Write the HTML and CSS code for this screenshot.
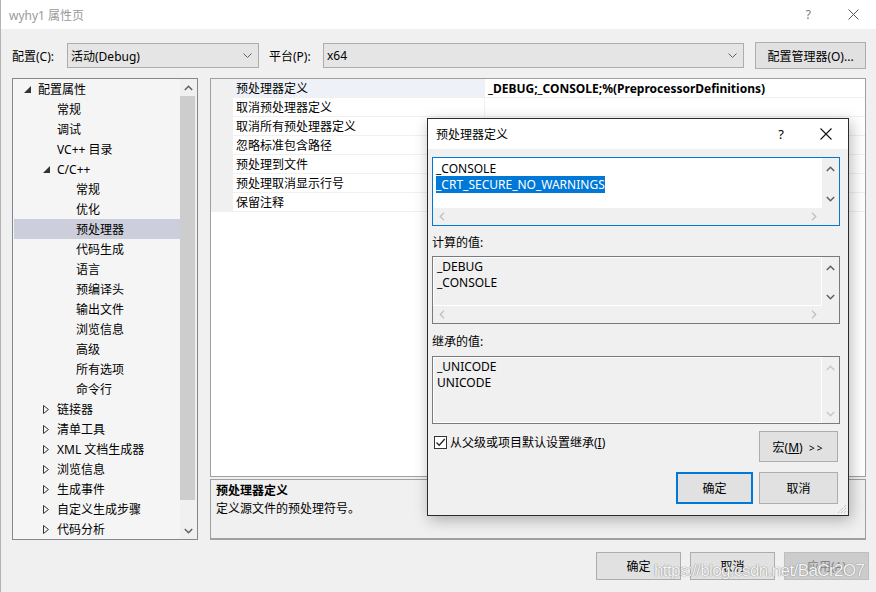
FILE: index.html
```html
<!DOCTYPE html>
<html>

<head>
    <meta charset="utf-8">
    <title>wyhy1 属性页</title>
    <link rel="stylesheet" href="styles.css">
</head>

<body>
    <div class="window">
        <div class="titlebar">
            <span class="title">wyhy1 属性页</span>
            <span class="help">?</span>
            <svg class="close" width="11" height="11" viewBox="0 0 11 11">
                <path d="M0.5 0.5L10.5 10.5M10.5 0.5L0.5 10.5" stroke="#555" stroke-width="1" fill="none" />
            </svg>
        </div>

        <div class="toolbar">
            <span class="lbl lbl-config">配置(C):</span>
            <div class="combo combo-config">
                <span class="combo-text">活动(Debug)</span>
                <svg width="9" height="5" viewBox="0 0 9 5">
                    <polyline points="0.5,0.5 4.5,4.5 8.5,0.5" stroke="#606060" fill="none" />
                </svg>
            </div>
            <span class="lbl lbl-platform">平台(P):</span>
            <div class="combo combo-platform">
                <span class="combo-text">x64</span>
                <svg width="9" height="5" viewBox="0 0 9 5">
                    <polyline points="0.5,0.5 4.5,4.5 8.5,0.5" stroke="#606060" fill="none" />
                </svg>
            </div>
            <button class="btn btn-manager">配置管理器(O)...</button>
        </div>

        <div class="main">
            <div class="tree">
                <div class="tree-list">
                    <div class="node l0"><span class="tw"><svg width="7" height="7" viewBox="0 0 7 7"><polygon points="7,0 7,7 0,7" fill="#333" /></svg></span>配置属性</div>
                    <div class="node l1 leaf">常规</div>
                    <div class="node l1 leaf">调试</div>
                    <div class="node l1 leaf">VC++ 目录</div>
                    <div class="node l1"><span class="tw"><svg width="7" height="7" viewBox="0 0 7 7"><polygon points="7,0 7,7 0,7" fill="#333" /></svg></span>C/C++</div>
                    <div class="node l2">常规</div>
                    <div class="node l2">优化</div>
                    <div class="node l2 sel">预处理器</div>
                    <div class="node l2">代码生成</div>
                    <div class="node l2">语言</div>
                    <div class="node l2">预编译头</div>
                    <div class="node l2">输出文件</div>
                    <div class="node l2">浏览信息</div>
                    <div class="node l2">高级</div>
                    <div class="node l2">所有选项</div>
                    <div class="node l2">命令行</div>
                    <div class="node l1"><span class="tw"><svg width="6" height="9" viewBox="0 0 6 9"><polygon points="0.5,0.5 5.5,4.5 0.5,8.5" stroke="#333" fill="none" /></svg></span>链接器</div>
                    <div class="node l1"><span class="tw"><svg width="6" height="9" viewBox="0 0 6 9"><polygon points="0.5,0.5 5.5,4.5 0.5,8.5" stroke="#333" fill="none" /></svg></span>清单工具</div>
                    <div class="node l1"><span class="tw"><svg width="6" height="9" viewBox="0 0 6 9"><polygon points="0.5,0.5 5.5,4.5 0.5,8.5" stroke="#333" fill="none" /></svg></span>XML 文档生成器</div>
                    <div class="node l1"><span class="tw"><svg width="6" height="9" viewBox="0 0 6 9"><polygon points="0.5,0.5 5.5,4.5 0.5,8.5" stroke="#333" fill="none" /></svg></span>浏览信息</div>
                    <div class="node l1"><span class="tw"><svg width="6" height="9" viewBox="0 0 6 9"><polygon points="0.5,0.5 5.5,4.5 0.5,8.5" stroke="#333" fill="none" /></svg></span>生成事件</div>
                    <div class="node l1"><span class="tw"><svg width="6" height="9" viewBox="0 0 6 9"><polygon points="0.5,0.5 5.5,4.5 0.5,8.5" stroke="#333" fill="none" /></svg></span>自定义生成步骤</div>
                    <div class="node l1"><span class="tw"><svg width="6" height="9" viewBox="0 0 6 9"><polygon points="0.5,0.5 5.5,4.5 0.5,8.5" stroke="#333" fill="none" /></svg></span>代码分析</div>
                </div>
                <div class="tree-scroll">
                    <div class="arrow-box">
                        <svg width="9" height="6" viewBox="0 0 9 6"><polyline points="0.8,5 4.5,1.3 8.2,5" stroke="#606060" stroke-width="1.5" fill="none" /></svg>
                    </div>
                    <div class="thumb"></div>
                    <div class="arrow-box arrow-bottom">
                        <svg width="9" height="6" viewBox="0 0 9 6"><polyline points="0.8,1 4.5,4.7 8.2,1" stroke="#606060" stroke-width="1.5" fill="none" /></svg>
                    </div>
                </div>
            </div>

            <div class="right">
                <div class="grid">
                    <div class="prow sel"><div class="pgut"></div><div class="pname">预处理器定义</div><div class="pval">_DEBUG;_CONSOLE;%(PreprocessorDefinitions)</div></div>
                    <div class="prow"><div class="pgut"></div><div class="pname">取消预处理器定义</div><div class="pval"></div></div>
                    <div class="prow"><div class="pgut"></div><div class="pname">取消所有预处理器定义</div><div class="pval"></div></div>
                    <div class="prow"><div class="pgut"></div><div class="pname">忽略标准包含路径</div><div class="pval"></div></div>
                    <div class="prow"><div class="pgut"></div><div class="pname">预处理到文件</div><div class="pval"></div></div>
                    <div class="prow"><div class="pgut"></div><div class="pname">预处理取消显示行号</div><div class="pval"></div></div>
                    <div class="prow"><div class="pgut"></div><div class="pname">保留注释</div><div class="pval"></div></div>
                </div>
                <div class="desc">
                    <div class="desc-title">预处理器定义</div>
                    <div>定义源文件的预处理符号。</div>
                </div>
            </div>
        </div>

        <div class="footer">
            <button class="btn btn-foot">确定</button>
            <button class="btn btn-foot">取消</button>
            <button class="btn btn-foot disabled">应用(A)</button>
        </div>

        <div class="watermark">https://blog.csdn.net/BaCr2O7</div>

        <!-- child dialog over the property page -->
        <div class="dialog">
            <div class="dlg-titlebar">
                <span class="dlg-title">预处理器定义</span>
                <span class="dlg-help">?</span>
                <svg class="dlg-close" width="12" height="12" viewBox="0 0 12 12">
                    <path d="M0.5 0.5L11.5 11.5M11.5 0.5L0.5 11.5" stroke="#111" stroke-width="1.1" fill="none" />
                </svg>
            </div>
            <div class="dlg-body">
                <div class="lbox focus box-edit">
                    <div class="lbox-main">
                        <div class="lbox-text">
                            <div>_CONSOLE</div>
                            <div><span class="hl">_CRT_SECURE_NO_WARNINGS</span></div>
                        </div>
                        <div class="vbar">
                            <svg width="9" height="6" viewBox="0 0 9 6"><polyline points="0.8,5 4.5,1.3 8.2,5" stroke="#606060" stroke-width="1.5" fill="none" /></svg>
                            <svg width="9" height="6" viewBox="0 0 9 6"><polyline points="0.8,1 4.5,4.7 8.2,1" stroke="#606060" stroke-width="1.5" fill="none" /></svg>
                        </div>
                    </div>
                    <div class="hbar">
                        <svg width="6" height="9" viewBox="0 0 6 9"><polyline points="5,0.8 1.3,4.5 5,8.2" stroke="#c2c2c2" stroke-width="1.4" fill="none" /></svg>
                        <svg width="6" height="9" viewBox="0 0 6 9"><polyline points="1,0.8 4.7,4.5 1,8.2" stroke="#c2c2c2" stroke-width="1.4" fill="none" /></svg>
                    </div>
                </div>

                <div class="dlg-label">计算的值:</div>
                <div class="lbox ro box-calc">
                    <div class="lbox-main">
                        <div class="lbox-text">
                            <div>_DEBUG</div>
                            <div>_CONSOLE</div>
                        </div>
                        <div class="vbar">
                            <svg width="9" height="6" viewBox="0 0 9 6"><polyline points="0.8,5 4.5,1.3 8.2,5" stroke="#606060" stroke-width="1.5" fill="none" /></svg>
                            <svg width="9" height="6" viewBox="0 0 9 6"><polyline points="0.8,1 4.5,4.7 8.2,1" stroke="#606060" stroke-width="1.5" fill="none" /></svg>
                        </div>
                    </div>
                    <div class="hbar">
                        <svg width="6" height="9" viewBox="0 0 6 9"><polyline points="5,0.8 1.3,4.5 5,8.2" stroke="#c2c2c2" stroke-width="1.4" fill="none" /></svg>
                        <svg width="6" height="9" viewBox="0 0 6 9"><polyline points="1,0.8 4.7,4.5 1,8.2" stroke="#c2c2c2" stroke-width="1.4" fill="none" /></svg>
                    </div>
                </div>

                <div class="dlg-label label-inherit">继承的值:</div>
                <div class="lbox ro box-inherit">
                    <div class="lbox-main">
                        <div class="lbox-text">
                            <div>_UNICODE</div>
                            <div>UNICODE</div>
                        </div>
                        <div class="vbar">
                            <svg width="9" height="6" viewBox="0 0 9 6"><polyline points="0.8,5 4.5,1.3 8.2,5" stroke="#c8c8c8" stroke-width="1.5" fill="none" /></svg>
                            <svg width="9" height="6" viewBox="0 0 9 6"><polyline points="0.8,1 4.5,4.7 8.2,1" stroke="#c8c8c8" stroke-width="1.5" fill="none" /></svg>
                        </div>
                    </div>
                </div>

                <div class="dlg-row">
                    <label class="chk">
                        <span class="chk-box">
                            <svg width="11" height="11" viewBox="0 0 11 11"><polyline points="1.5,5.5 4.2,8.3 9.8,2" stroke="#222" stroke-width="1.3" fill="none" /></svg>
                        </span>
                        从父级或项目默认设置继承(<u>I</u>)
                    </label>
                    <button class="btn btn-macro">宏(<u>M</u>)&nbsp; <span class="gg">&gt;&gt;</span></button>
                </div>

                <div class="dlg-buttons">
                    <button class="btn btn-ok">确定</button>
                    <button class="btn btn-cancel">取消</button>
                </div>
            </div>
            <svg class="grip" width="11" height="11" viewBox="0 0 11 11">
                <path d="M10 2L2 10M10 5L5 10M10 8L8 10" stroke="#b0b0b0" stroke-width="1" stroke-dasharray="1 1" fill="none" />
            </svg>
        </div>
    </div>
</body>

</html>
```

FILE: styles.css
```css
body {
    margin: 0;
    padding: 0;
    font-family: "Noto Sans", "Noto Sans CJK SC", sans-serif;
    font-size: 12px;
    color: #000;
    background-color: #f0f0f0;
}

button {
    font-family: inherit;
    font-size: 12px;
    color: #000;
    padding: 0;
}

.window {
    position: relative;
    width: 876px;
    height: 592px;
    box-sizing: border-box;
    border-left: 1px solid #b4b4b4;
    background-color: #f0f0f0;
    overflow: hidden;
}

/* title bar */
.titlebar {
    height: 29px;
    background-color: #ffffff;
    display: flex;
    align-items: center;
    padding-left: 8px;
    padding-right: 17px;
}

.title {
    flex: 1;
    color: #9a9a9a;
}

.help {
    color: #777;
    font-size: 12px;
    margin-right: 37px;
}

/* configuration row */
.toolbar {
    display: flex;
    align-items: center;
    height: 27px;
    padding: 13px 0 0 11px;
}

.lbl {
    white-space: nowrap;
}

.lbl-config {
    width: 55px;
}

.lbl-platform {
    width: 54px;
    margin-left: 10px;
}

.combo {
    height: 25px;
    box-sizing: border-box;
    border: 1px solid #adadad;
    background-color: #e5e5e5;
    display: flex;
    align-items: center;
    padding: 0 6px 0 3px;
}

.combo-text {
    flex: 1;
}

.combo-config {
    width: 192px;
}

.combo-platform {
    width: 421px;
}

.btn {
    box-sizing: border-box;
    border: 1px solid #adadad;
    background-color: #e1e1e1;
}

.btn-manager {
    width: 111px;
    height: 27px;
    margin-left: 11px;
}

/* tree + property grid */
.main {
    display: flex;
    gap: 12px;
    height: 462px;
    margin-top: 9px;
    padding-left: 11px;
}

.tree {
    width: 186px;
    box-sizing: border-box;
    border: 1px solid #828790;
    background-color: #f5f5f5;
    display: flex;
    overflow: hidden;
}

.tree-list {
    flex: 1;
    min-width: 0;
}

.node {
    height: 20px;
    display: flex;
    align-items: center;
    white-space: nowrap;
}

.tw {
    width: 14px;
    display: flex;
    align-items: center;
}

.l0 {
    padding-left: 11px;
}

.l1 {
    padding-left: 30px;
}

.l1.leaf {
    padding-left: 44px;
}

.l2 {
    padding-left: 63px;
}

.node.sel {
    background-color: #cccedb;
    margin-left: 1px;
    padding-left: 62px;
}

.tree-scroll {
    width: 17px;
    background-color: #f0f0f0;
    display: flex;
    flex-direction: column;
}

.arrow-box {
    height: 17px;
    display: flex;
    align-items: center;
    justify-content: center;
}

.arrow-bottom {
    margin-top: auto;
}

.thumb {
    height: 404px;
    width: 15px;
    margin-left: 0;
    background-color: #cdcdcd;
}

.right {
    width: 656px;
    display: flex;
    flex-direction: column;
    gap: 2px;
}

.grid {
    flex: 1;
    border: 1px solid #a0a0a0;
    background-color: #ffffff;
}

.prow {
    display: flex;
    height: 19px;
}

.pgut {
    width: 22px;
    background-color: #f0f0f0;
}

.pname {
    width: 252px;
    box-sizing: border-box;
    height: 19px;
    padding: 2px 0 0 3px;
    line-height: 16px;
    border-right: 1px solid #f0f0f0;
    border-bottom: 1px solid #f0f0f0;
}

.prow.sel .pname {
    background-color: #eef2f8;
}

.pval {
    flex: 1;
    box-sizing: border-box;
    height: 19px;
    padding: 2px 0 0 3px;
    line-height: 16px;
    font-weight: bold;
    border-bottom: 1px solid #f0f0f0;
    white-space: nowrap;
}

.desc {
    height: 61px;
    box-sizing: border-box;
    border: 1px solid #a0a0a0;
    border-bottom: 2px solid #a0a0a0;
    background-color: #f0f0f0;
    padding: 2px 5px;
    line-height: 18px;
}

.desc-title {
    font-weight: bold;
}

/* bottom buttons */
.footer {
    display: flex;
    justify-content: flex-end;
    gap: 9px;
    padding: 12px 7px 0 0;
}

.btn-foot {
    width: 85px;
    height: 28px;
}

.btn-foot.disabled {
    background-color: #cccccc;
    border-color: #bfbfbf;
    color: #838383;
}

.watermark {
    position: absolute;
    left: 653px;
    top: 561px;
    font-family: "Liberation Sans", sans-serif;
    font-size: 17px;
    letter-spacing: -0.6px;
    color: rgba(255, 255, 255, 0.92);
    text-shadow: 0 0 1px #8a8a8a, 0 0 1px #8a8a8a;
    white-space: nowrap;
    pointer-events: none;
}

/* preprocessor definitions dialog */
.dialog {
    position: absolute;
    left: 426px;
    top: 118px;
    width: 422px;
    height: 398px;
    box-sizing: border-box;
    border: 1px solid #2b2b2b;
    background-color: #f0f0f0;
    box-shadow: 2px 4px 14px rgba(0, 0, 0, 0.28);
}

.dlg-titlebar {
    height: 30px;
    background-color: #ffffff;
    display: flex;
    align-items: center;
    padding: 0 16px 0 8px;
}

.dlg-title {
    flex: 1;
}

.dlg-help {
    font-size: 13px;
    margin-right: 36px;
}

.dlg-body {
    padding: 8px 7px 0 4px;
}

.lbox {
    width: 408px;
    box-sizing: border-box;
    border: 1px solid #7a7a7a;
    background-color: #f0f0f0;
    display: flex;
    flex-direction: column;
    line-height: 16px;
}

.lbox.focus {
    border-color: #0078d7;
}

.box-edit {
    height: 69px;
}

.box-calc,
.box-inherit {
    height: 68px;
}

.lbox-main {
    flex: 1;
    display: flex;
    min-height: 0;
}

.lbox-text {
    flex: 1;
    background-color: #ffffff;
    padding: 3px 0 0 3px;
}

.lbox.ro .lbox-text {
    background-color: #f0f0f0;
    border: 1px solid #ffffff;
    padding: 1px 0 0 3px;
}

.hl {
    background-color: #0078d7;
    color: #ffffff;
}

.vbar {
    width: 17px;
    display: flex;
    flex-direction: column;
    justify-content: space-between;
    align-items: center;
    padding: 8px 0 6px;
}

.hbar {
    height: 17px;
    display: flex;
    align-items: center;
    justify-content: space-between;
    padding: 0 22px 0 6px;
}

.dlg-label {
    margin: 7px 0 3px;
    line-height: 20px;
}

.label-inherit {
    margin: 8px 0 4px;
}

.dlg-row {
    display: flex;
    align-items: flex-start;
    margin-top: 7px;
}

.chk {
    flex: 1;
    display: flex;
    align-items: center;
    height: 16px;
    margin-top: 3px;
}

.chk-box {
    width: 13px;
    height: 13px;
    box-sizing: border-box;
    border: 1px solid #333;
    background-color: #ffffff;
    margin: 0 3px 0 2px;
    display: flex;
    align-items: center;
    justify-content: center;
}

.btn-macro {
    width: 79px;
    height: 31px;
    margin-right: 3px;
}

.gg {
    font-size: 10px;
    letter-spacing: 2px;
}

.dlg-buttons {
    display: flex;
    justify-content: flex-end;
    gap: 6px;
    margin-top: 10px;
    padding-right: 3px;
}

.btn-ok {
    width: 77px;
    height: 32px;
    border: 2px solid #0078d7;
}

.btn-cancel {
    width: 79px;
    height: 32px;
}

.grip {
    position: absolute;
    right: 1px;
    bottom: 1px;
}
```
